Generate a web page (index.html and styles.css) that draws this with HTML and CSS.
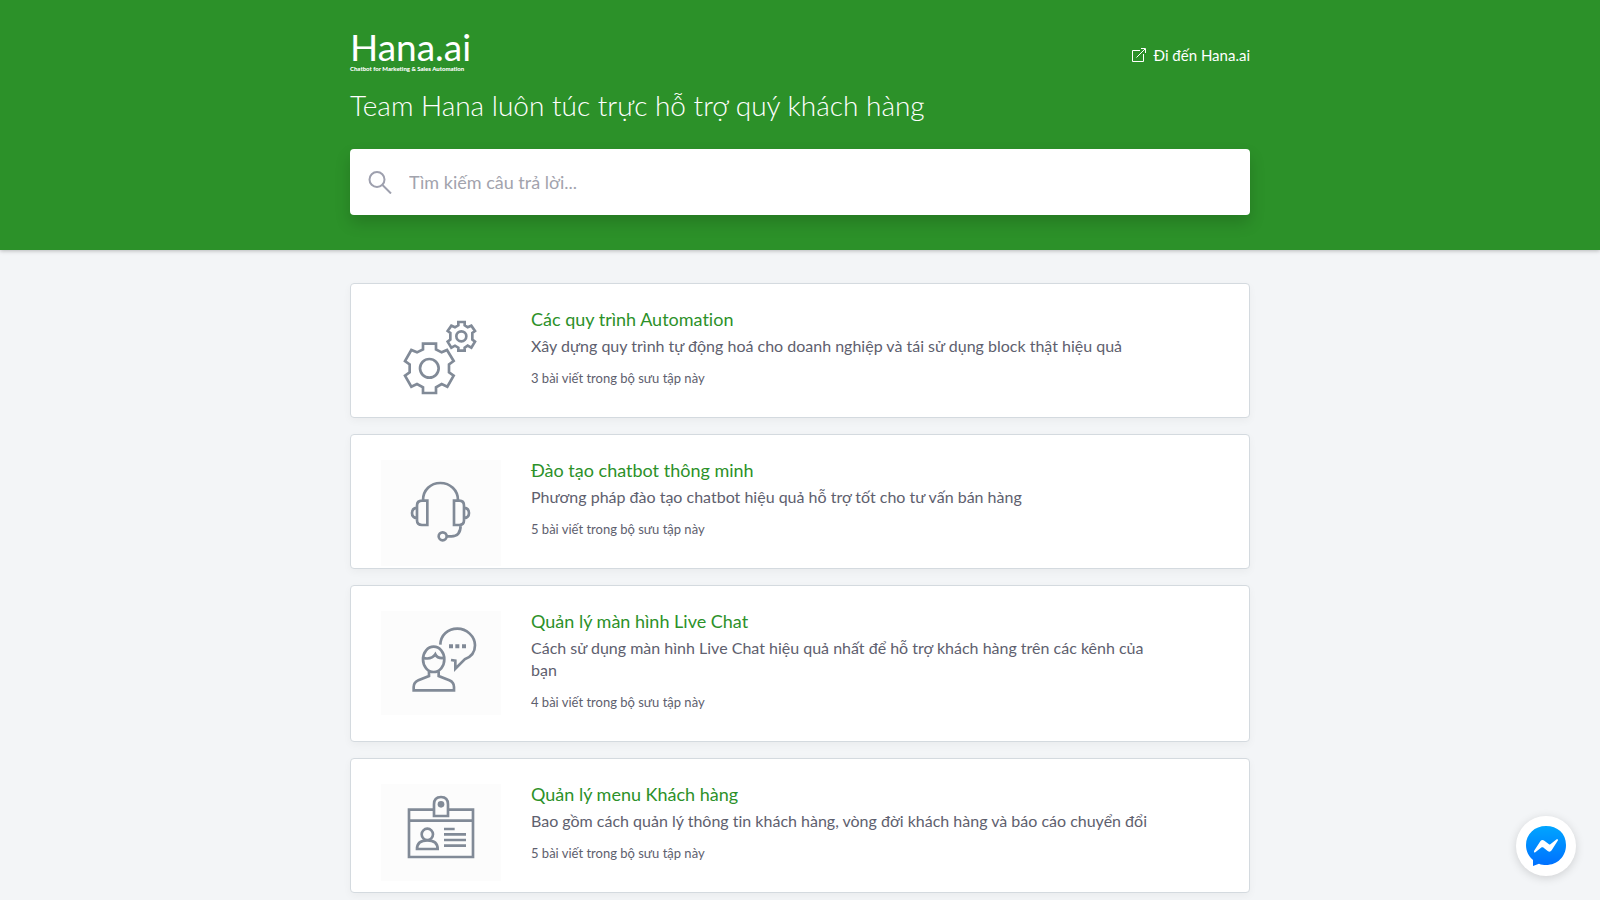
FILE: index.html
```html
<!DOCTYPE html>
<html lang="vi">
<head>
<meta charset="utf-8">
<meta name="viewport" content="width=device-width, initial-scale=1">
<title>Hana.ai</title>
<link rel="stylesheet" href="styles.css">
</head>
<body>
<header class="header">
  <div class="container">
    <div class="header-bar">
      <a class="logo" href="#">
        <span class="logo-name">Hana.ai</span>
        <span class="logo-tagline">Chatbot for Marketing &amp; Sales Automation</span>
      </a>
      <a class="site-link" href="#">
        <svg class="site-link-icon" viewBox="0 0 14 14" aria-hidden="true"><path d="M8 2.5H.5v11h11V6M9 .5h4.500V5M13 1L4.500 9.500"/></svg>
        <span>Đi đến Hana.ai</span>
      </a>
    </div>
    <h1 class="headline">Team Hana luôn túc trực hỗ trợ quý khách hàng</h1>
    <form class="search" role="search">
      <svg class="search-icon" viewBox="0 0 24 24" aria-hidden="true"><circle cx="9" cy="9.500" r="7.500"/><path d="M14.500 15L23 23.500"/></svg>
      <input class="search-input" type="text" aria-label="Tìm kiếm câu trả lời" placeholder="Tìm kiếm câu trả lời...">
    </form>
  </div>
</header>
<main class="container collections">
  <a class="card" href="#">
    <svg class="card-art" viewBox="123 117 360 300" aria-hidden="true">
      <path class="line" d="M249 221H288V238L305 247L321 240L341 273L327 283V307L341 317L322 350L305 342L288 352V369H249V352L231 342L214 350L195 317L209 307V283L195 273L214 240L231 247L249 238Z"/>
      <circle class="line" cx="268" cy="295" r="28"/>
      <path class="line" d="M355 156H374V166L383 172L394 167L405 183L397 189V209L405 215L394 233L383 227L374 233V242H355V233L345 227L334 233L323 215L331 209V189L323 183L334 167L345 172L355 166Z"/>
      <circle class="line" cx="364" cy="199" r="15"/>
    </svg>
    <div class="card-text">
      <h2 class="card-title">Các quy trình Automation</h2>
      <p class="card-desc">Xây dựng quy trình tự động hoá cho doanh nghiệp và tái sử dụng block thật hiệu quả</p>
      <p class="card-meta">3 bài viết trong bộ sưu tập này</p>
    </div>
  </a>
  <a class="card" href="#">
    <svg class="card-art tinted" viewBox="123 105 360 318" aria-hidden="true">
      <path class="line" d="M249 226C249 195 272 174 301 174S354 195 354 226M262 227H246Q231 227 231 242V286Q231 300 246 300H262ZM231 248Q216 250 216 264T231 280M342 227H358Q372 227 372 242V286Q372 300 358 300H342ZM372 248Q387 250 387 264T372 280M362 300Q362 334 334 334H321"/>
      <circle class="line" cx="308" cy="334" r="12"/>
    </svg>
    <div class="card-text">
      <h2 class="card-title">Đào tạo chatbot thông minh</h2>
      <p class="card-desc">Phương pháp đào tạo chatbot hiệu quả hỗ trợ tốt cho tư vấn bán hàng</p>
      <p class="card-meta">5 bài viết trong bộ sưu tập này</p>
    </div>
  </a>
  <a class="card" href="#">
    <svg class="card-art tinted" viewBox="123 108 360 312" aria-hidden="true">
      <ellipse class="line" cx="281" cy="253" rx="32" ry="38"/>
      <path class="line" d="M249 249Q275 255 286 238Q292 251 312 249M267 289V303L235 316Q221 322 221 336V346H342V336Q342 322 328 316L296 303V289M301 209C302 180 324 161 352 161S405 184 405 211C405 234 391 247 374 253L346 281V257L333 255"/>
      <path class="solid" d="M327 208h12v12h-12zM346 208h12v12h-12zM366 208h12v12h-12z"/>
    </svg>
    <div class="card-text">
      <h2 class="card-title">Quản lý màn hình Live Chat</h2>
      <p class="card-desc">Cách sử dụng màn hình Live Chat hiệu quả nhất để hỗ trợ khách hàng trên các kênh của bạn</p>
      <p class="card-meta">4 bài viết trong bộ sưu tập này</p>
    </div>
  </a>
  <a class="card" href="#">
    <svg class="card-art tinted" viewBox="123 102 360 291" aria-hidden="true">
      <path class="line" d="M282 179H207V321H399V179H324M207 212H399"/>
      <path class="line clip" d="M282 198V163Q282 141 303 141T324 163V198Z"/>
      <circle class="solid" cx="303" cy="163" r="10"/>
      <circle class="line" cx="262" cy="253" r="17"/>
      <path class="line" d="M231 297Q231 271 262 271T293 297Z"/>
      <path class="line" d="M312 237H344M312 253H378M312 270H378M312 287H378"/>
    </svg>
    <div class="card-text">
      <h2 class="card-title">Quản lý menu Khách hàng</h2>
      <p class="card-desc">Bao gồm cách quản lý thông tin khách hàng, vòng đời khách hàng và báo cáo chuyển đổi</p>
      <p class="card-meta">5 bài viết trong bộ sưu tập này</p>
    </div>
  </a>
</main>
<button class="messenger" type="button" aria-label="Messenger">
  <svg class="messenger-icon" viewBox="0 0 120 120" aria-hidden="true">
    <defs><linearGradient id="bubble" x1="0" y1="0" x2="0" y2="1"><stop offset="0" stop-color="#00a5ff"/><stop offset="1" stop-color="#0070ff"/></linearGradient></defs>
    <path fill="url(#bubble)" d="M60 0C26 0 0 24 0 57c0 19 8 34 21 45v18l18-7c7 3 14 4 21 4 34 0 60-25 60-60S94 0 60 0z"/>
    <path fill="#fff" d="M24 75L43 46q5-7 12-2l14 11q2 1 4 0l19-15q5-2 4 3L77 73q-5 7-12 2L51 64q-2-1-4 0L28 79q-5 2-4-4z"/>
  </svg>
</button>
</body>
</html>
```
FILE: styles.css
```css
* {
  box-sizing: border-box;
}

body {
  margin: 0;
  background: #f3f5f7;
  color: #5e606e;
  font-family: Lato, "Noto Sans", sans-serif;
  font-size: 16px;
  font-variant-ligatures: none;
  line-height: 22px;
}

a {
  color: inherit;
  text-decoration: none;
}

h1,
h2,
p {
  margin: 0;
  font-weight: 400;
}

.container {
  max-width: 948px;
  margin: 0 auto;
  padding: 0 24px;
}

.header {
  padding: 28px 0 35px;
  background: #2c9129;
  color: #fff;
  box-shadow: 0 1px 4px rgba(0, 0, 0, 0.25);
}

.header-bar {
  display: flex;
  align-items: center;
  justify-content: space-between;
  height: 54px;
}

.logo {
  display: flex;
  flex-direction: column;
  padding-bottom: 8px;
}

.logo-name {
  font-size: 37px;
  line-height: 36px;
}

.logo-tagline {
  font-size: 6px;
  font-weight: 900;
  line-height: 8px;
}

.site-link {
  display: flex;
  align-items: center;
  gap: 8px;
  font-size: 15px;
}

.site-link-icon {
  width: 14px;
  height: 14px;
  fill: none;
  stroke: #fff;
}

.headline {
  margin: 5px 0 26px;
  font-size: 28px;
  font-weight: 300;
  line-height: 36px;
}

.search {
  display: flex;
  align-items: center;
  gap: 17px;
  height: 66px;
  padding: 0 18px;
  border-radius: 4px;
  background: #fff;
  box-shadow: 0 8px 16px rgba(0, 0, 0, 0.16);
}

.search-icon {
  width: 24px;
  height: 24px;
  fill: none;
  stroke: #9ea0ae;
  stroke-width: 2;
}

.search-input {
  flex: 1;
  min-width: 0;
  padding: 0;
  border: 0;
  outline: 0;
  background: none;
  color: #5e606e;
  font: inherit;
  font-size: 18px;
}

.search-input::placeholder {
  color: #a2a3ad;
}

.collections {
  display: flex;
  flex-direction: column;
  gap: 16px;
  padding-top: 33px;
  padding-bottom: 40px;
}

.card {
  display: flex;
  align-items: flex-start;
  gap: 30px;
  padding: 25px 84px 2px 30px;
  border: 1px solid #d4dadf;
  border-radius: 4px;
  background: #fff;
  box-shadow: 0 3px 8px rgba(0, 0, 0, 0.04);
}

.card-art {
  flex: none;
  width: 120px;
}

.tinted {
  background: #fcfcfc;
}

.line {
  fill: none;
  stroke: #818a97;
  stroke-width: 8;
}

.clip {
  fill: #fcfcfc;
}

.solid {
  fill: #818a97;
}

.card-text {
  flex: 1;
  min-width: 0;
  padding-bottom: 27px;
}

.card-title {
  color: #2c9129;
  font-size: 18px;
  line-height: 20px;
}

.card-desc {
  margin-top: 6px;
}

.card-meta {
  margin-top: 11px;
  font-size: 13px;
  line-height: 20px;
}

.messenger {
  position: fixed;
  right: 24px;
  bottom: 24px;
  display: grid;
  place-items: center;
  width: 60px;
  height: 60px;
  padding: 0;
  border: 0;
  border-radius: 50%;
  background: #fff;
  box-shadow: 0 2px 10px rgba(0, 0, 0, 0.15);
}

.messenger-icon {
  width: 40px;
  height: 40px;
}
```
